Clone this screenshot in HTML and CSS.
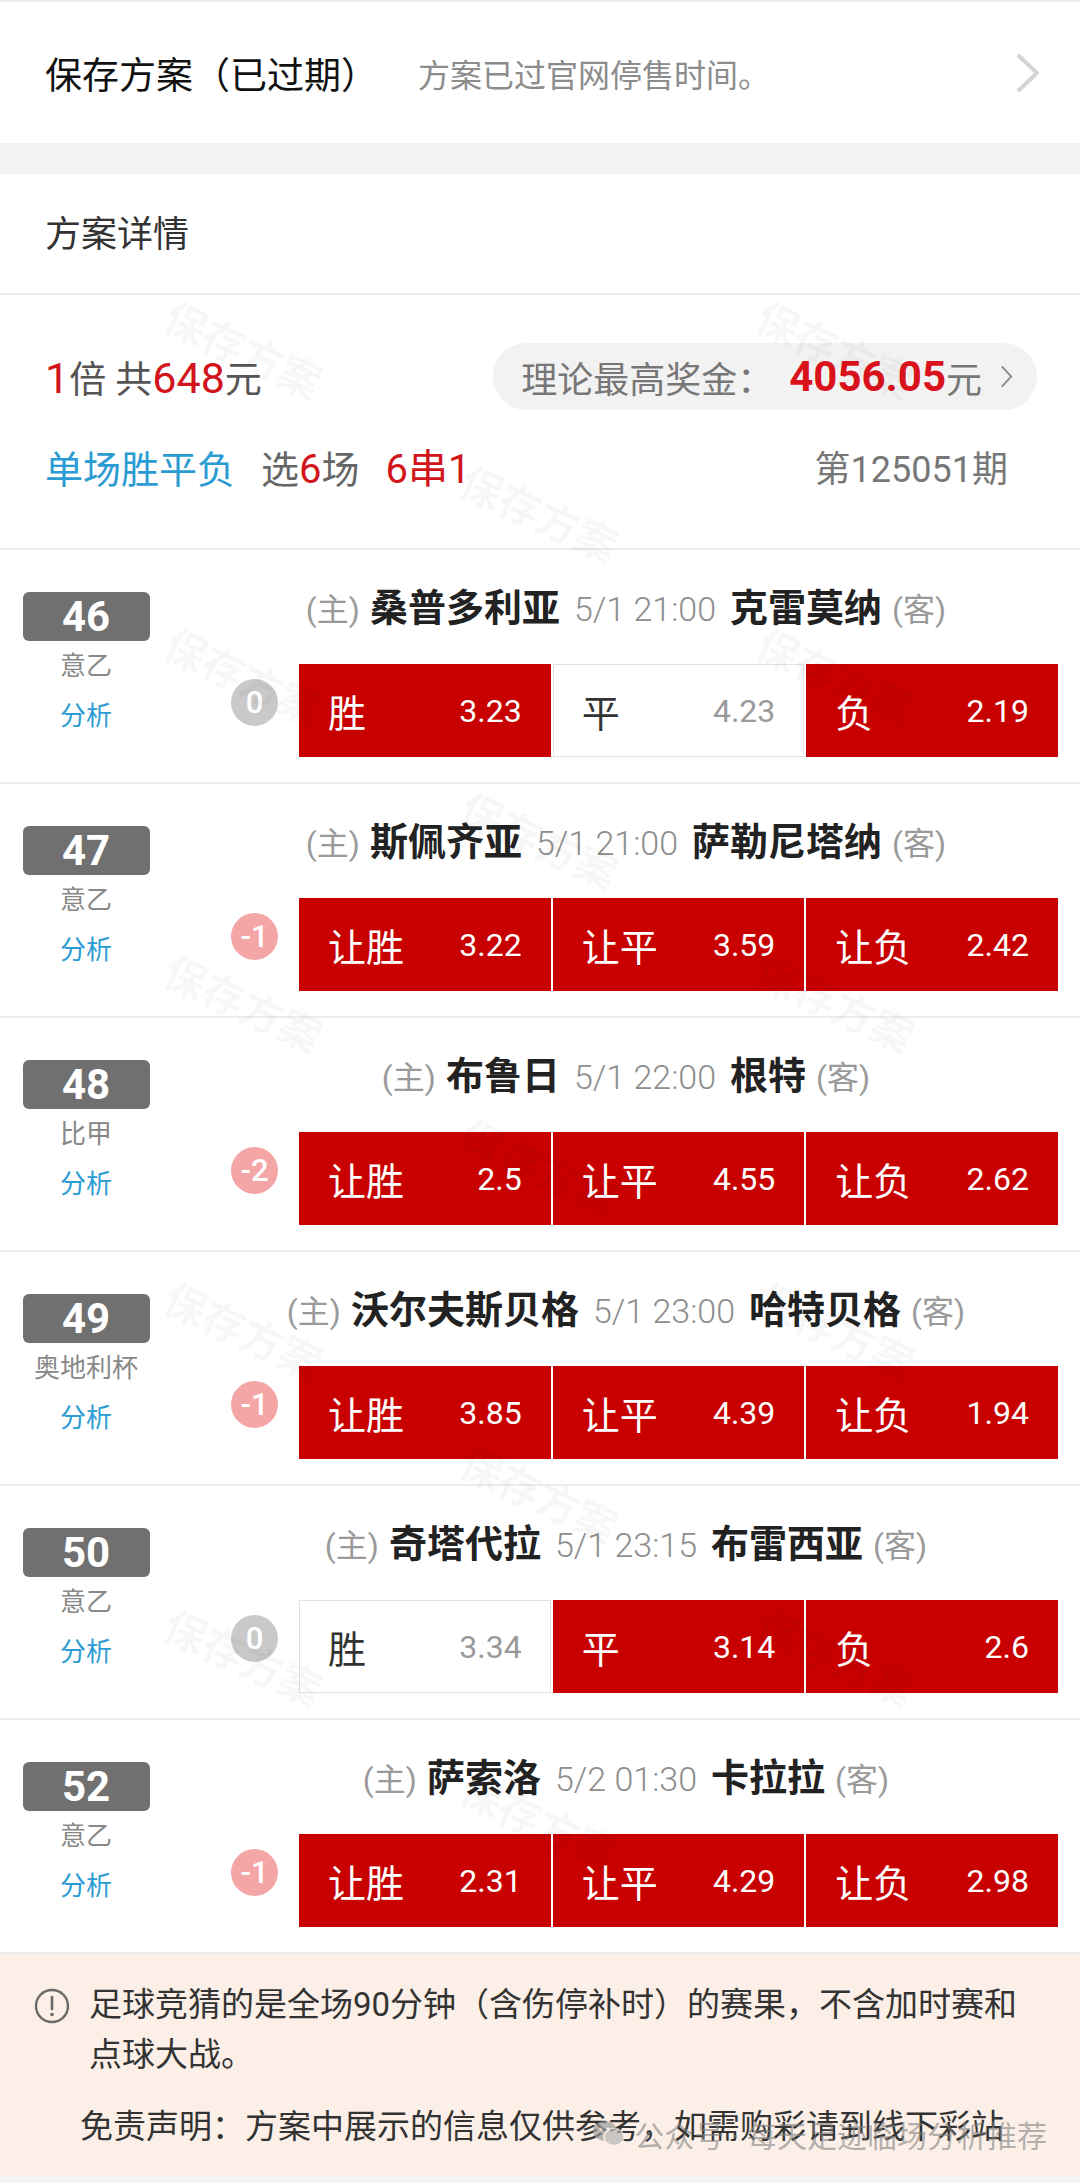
FILE: index.html
```html
<!DOCTYPE html>
<html lang="zh-CN">
<head>
    <meta charset="UTF-8">
    <meta name="viewport" content="width=device-width, initial-scale=1.0">
    <title>方案详情</title>
    <link rel="stylesheet" href="styles.css">
</head>
<body>
    <header class="plan-head">
        <span class="plan-title">保存方案（已过期）</span>
        <span class="plan-note">方案已过官网停售时间。</span>
        <svg class="plan-arrow" viewBox="0 0 26 42"><polyline points="4,4 22,21 4,38" fill="none" stroke="#d4d4d4" stroke-width="4" stroke-linecap="round" stroke-linejoin="round"/></svg>
    </header>

    <section class="detail">
        <div class="detail-title">方案详情</div>

        <div class="summary">
            <div class="summary-row">
                <div class="stake"><em>1</em>倍 共<em>648</em>元</div>
                <div class="prize">
                    <span>理论最高奖金：</span><b>4056.05</b><span>元</span>
                    <svg class="prize-arrow" viewBox="0 0 14 26"><polyline points="2,2 12,13 2,24" fill="none" stroke="#8a8a8a" stroke-width="2"/></svg>
                </div>
            </div>
            <div class="summary-row">
                <div class="play">
                    <span class="play-type">单场胜平负</span>
                    <span>选<em>6</em>场</span>
                    <em>6串1</em>
                </div>
                <div class="issue">第125051期</div>
            </div>
        </div>

        <div class="match">
            <div class="match-side">
                <div class="match-no">46</div>
                <div class="league">意乙</div>
                <div class="analyse">分析</div>
            </div>
            <div class="match-main">
                <div class="teams"><span class="tag">(主)</span><span class="team">桑普多利亚</span><span class="time">5/1 21:00</span><span class="team">克雷莫纳</span><span class="tag">(客)</span></div>
                <div class="bet">
                    <div class="handicap">0</div>
                    <div class="odds">
                        <div class="odd on"><span class="odd-name">胜</span><span class="odd-val">3.23</span></div>
                        <div class="odd"><span class="odd-name">平</span><span class="odd-val">4.23</span></div>
                        <div class="odd on"><span class="odd-name">负</span><span class="odd-val">2.19</span></div>
                    </div>
                </div>
            </div>
        </div>

        <div class="match">
            <div class="match-side">
                <div class="match-no">47</div>
                <div class="league">意乙</div>
                <div class="analyse">分析</div>
            </div>
            <div class="match-main">
                <div class="teams"><span class="tag">(主)</span><span class="team">斯佩齐亚</span><span class="time">5/1 21:00</span><span class="team">萨勒尼塔纳</span><span class="tag">(客)</span></div>
                <div class="bet">
                    <div class="handicap minus">-1</div>
                    <div class="odds">
                        <div class="odd on"><span class="odd-name">让胜</span><span class="odd-val">3.22</span></div>
                        <div class="odd on"><span class="odd-name">让平</span><span class="odd-val">3.59</span></div>
                        <div class="odd on"><span class="odd-name">让负</span><span class="odd-val">2.42</span></div>
                    </div>
                </div>
            </div>
        </div>

        <div class="match">
            <div class="match-side">
                <div class="match-no">48</div>
                <div class="league">比甲</div>
                <div class="analyse">分析</div>
            </div>
            <div class="match-main">
                <div class="teams"><span class="tag">(主)</span><span class="team">布鲁日</span><span class="time">5/1 22:00</span><span class="team">根特</span><span class="tag">(客)</span></div>
                <div class="bet">
                    <div class="handicap minus">-2</div>
                    <div class="odds">
                        <div class="odd on"><span class="odd-name">让胜</span><span class="odd-val">2.5</span></div>
                        <div class="odd on"><span class="odd-name">让平</span><span class="odd-val">4.55</span></div>
                        <div class="odd on"><span class="odd-name">让负</span><span class="odd-val">2.62</span></div>
                    </div>
                </div>
            </div>
        </div>

        <div class="match">
            <div class="match-side">
                <div class="match-no">49</div>
                <div class="league">奥地利杯</div>
                <div class="analyse">分析</div>
            </div>
            <div class="match-main">
                <div class="teams"><span class="tag">(主)</span><span class="team">沃尔夫斯贝格</span><span class="time">5/1 23:00</span><span class="team">哈特贝格</span><span class="tag">(客)</span></div>
                <div class="bet">
                    <div class="handicap minus">-1</div>
                    <div class="odds">
                        <div class="odd on"><span class="odd-name">让胜</span><span class="odd-val">3.85</span></div>
                        <div class="odd on"><span class="odd-name">让平</span><span class="odd-val">4.39</span></div>
                        <div class="odd on"><span class="odd-name">让负</span><span class="odd-val">1.94</span></div>
                    </div>
                </div>
            </div>
        </div>

        <div class="match">
            <div class="match-side">
                <div class="match-no">50</div>
                <div class="league">意乙</div>
                <div class="analyse">分析</div>
            </div>
            <div class="match-main">
                <div class="teams"><span class="tag">(主)</span><span class="team">奇塔代拉</span><span class="time">5/1 23:15</span><span class="team">布雷西亚</span><span class="tag">(客)</span></div>
                <div class="bet">
                    <div class="handicap">0</div>
                    <div class="odds">
                        <div class="odd"><span class="odd-name">胜</span><span class="odd-val">3.34</span></div>
                        <div class="odd on"><span class="odd-name">平</span><span class="odd-val">3.14</span></div>
                        <div class="odd on"><span class="odd-name">负</span><span class="odd-val">2.6</span></div>
                    </div>
                </div>
            </div>
        </div>

        <div class="match">
            <div class="match-side">
                <div class="match-no">52</div>
                <div class="league">意乙</div>
                <div class="analyse">分析</div>
            </div>
            <div class="match-main">
                <div class="teams"><span class="tag">(主)</span><span class="team">萨索洛</span><span class="time">5/2 01:30</span><span class="team">卡拉拉</span><span class="tag">(客)</span></div>
                <div class="bet">
                    <div class="handicap minus">-1</div>
                    <div class="odds">
                        <div class="odd on"><span class="odd-name">让胜</span><span class="odd-val">2.31</span></div>
                        <div class="odd on"><span class="odd-name">让平</span><span class="odd-val">4.29</span></div>
                        <div class="odd on"><span class="odd-name">让负</span><span class="odd-val">2.98</span></div>
                    </div>
                </div>
            </div>
        </div>

        <!-- watermark layer -->
        <div class="watermark">
            <i>保存方案</i><i></i><i>保存方案</i><i></i><i>保存方案</i><i></i>
            <i>保存方案</i><i></i><i>保存方案</i><i></i><i>保存方案</i><i></i>
            <i>保存方案</i><i></i><i>保存方案</i><i></i><i>保存方案</i><i></i>
            <i>保存方案</i><i></i><i>保存方案</i><i></i><i>保存方案</i><i></i>
            <i>保存方案</i><i></i><i>保存方案</i><i></i><i>保存方案</i><i></i>
        </div>
    </section>

    <div class="notice">
        <div class="notice-line">
            <svg class="notice-icon" viewBox="0 0 36 36"><circle cx="18" cy="18" r="16" fill="none" stroke="#6a6a6a" stroke-width="2.4"/><line x1="18" y1="9" x2="18" y2="21" stroke="#6a6a6a" stroke-width="2.6" stroke-linecap="round"/><circle cx="18" cy="26.5" r="1.8" fill="#6a6a6a"/></svg>
            <p>足球竞猜的是全场90分钟（含伤停补时）的赛果，不含加时赛和点球大战。</p>
        </div>
        <p class="disclaimer">免责声明：方案中展示的信息仅供参考，如需购彩请到线下彩站</p>
        <div class="wx-mark">
            <svg class="wx-logo" viewBox="0 0 34 30"><ellipse cx="13" cy="12" rx="12" ry="10" fill="#9c9c9c"/><ellipse cx="22" cy="18" rx="10" ry="8.5" fill="#b5b5b5" stroke="#fcefe7" stroke-width="1.5"/><circle cx="9" cy="10" r="1.6" fill="#fcefe7"/><circle cx="16" cy="10" r="1.6" fill="#fcefe7"/></svg>
            <span>公众号 · 每天足迹临场分析推荐</span>
        </div>
    </div>
</body>
</html>
```

FILE: styles.css
```css
body {
    margin: 0;
    background: #f3f3f3;
    font-family: Roboto, "Noto Sans CJK SC", sans-serif;
    color: #333;
}

p {
    margin: 0;
}

em {
    font-style: normal;
    color: #d2141b;
}

/* header */
.plan-head {
    height: 143px;
    box-sizing: border-box;
    border-top: 2px solid #ececec;
    background: #fff;
    display: flex;
    align-items: center;
    padding: 0 39px 0 45px;
}

.plan-title {
    font-size: 37px;
    color: #111;
}

.plan-note {
    flex: 1;
    margin-left: 40px;
    font-size: 32px;
    color: #8c8c8c;
}

.plan-arrow {
    width: 26px;
    height: 42px;
}

/* detail */
.detail {
    position: relative;
    overflow: hidden;
    margin-top: 31px;
    background: #fff;
}

.detail-title {
    height: 121px;
    box-sizing: border-box;
    padding: 4px 0 0 45px;
    line-height: 115px;
    font-size: 36px;
    color: #333;
    border-bottom: 2px solid #ececec;
}

.summary {
    padding: 48px 43px 53px 45px;
    border-bottom: 2px solid #ececec;
}

.summary-row {
    display: flex;
    justify-content: space-between;
    align-items: center;
}

.summary-row + .summary-row {
    margin-top: 35px;
    line-height: 50px;
}

.stake {
    font-size: 37px;
    color: #555;
}

.stake em {
    font-size: 43px;
}

.prize {
    height: 67px;
    border-radius: 34px;
    background: #f2f2f2;
    padding: 0 24px 0 28px;
    display: flex;
    align-items: center;
    font-size: 36px;
    color: #777;
}

.prize b {
    margin-left: 16px;
    font-size: 42px;
    color: #d9121b;
}

.prize-arrow {
    width: 13px;
    height: 25px;
    margin-left: 18px;
}

.play {
    display: flex;
    align-items: baseline;
    gap: 26px;
    font-size: 38px;
    color: #666;
}

.play em {
    font-size: 40px;
}

.play-type {
    color: #2b9bd3;
}

.issue {
    margin-right: 29px;
    font-size: 36px;
    color: #777;
}

/* matches */
.match {
    display: flex;
    height: 234px;
    box-sizing: border-box;
    border-bottom: 2px solid #ececec;
}

.match-side {
    width: 172px;
    padding-top: 42px;
    display: flex;
    flex-direction: column;
    align-items: center;
}

.match-no {
    width: 127px;
    height: 49px;
    border-radius: 6px;
    background: #707070;
    color: #fff;
    font-size: 42px;
    font-weight: 700;
    line-height: 49px;
    text-align: center;
}

.league,
.analyse {
    font-size: 26px;
    line-height: 50px;
    color: #888;
}

.analyse {
    color: #2b9bd3;
}

.match-main {
    flex: 1;
    padding-top: 33px;
}

.teams {
    display: flex;
    justify-content: center;
    align-items: baseline;
    gap: 10px;
    line-height: 50px;
    white-space: nowrap;
}

.tag {
    font-size: 32px;
    color: #9a9a9a;
}

.team {
    font-size: 38px;
    font-weight: 700;
    color: #222;
}

.time {
    margin: 0 4px;
    font-size: 34px;
    font-weight: 300;
    color: #8e8e8e;
}

.bet {
    display: flex;
    align-items: center;
    margin: 29px 22px 0 0;
}

.handicap {
    width: 47px;
    height: 47px;
    flex: none;
    margin: 0 21px 16px 59px;
    border-radius: 50%;
    background: #c9c9c9;
    color: #fff;
    font-size: 31px;
    font-weight: 500;
    line-height: 47px;
    text-align: center;
}

.handicap.minus {
    background: #f4a6a6;
}

.odds {
    flex: 1;
    height: 93px;
    display: grid;
    grid-template-columns: repeat(3, 1fr);
    gap: 2px;
}

.odd {
    display: flex;
    justify-content: space-between;
    align-items: center;
    padding: 0 28px;
    background: #fff;
    border: 1px solid #e3e3e3;
    color: #333;
}

.odd.on {
    background: #c80000;
    border-color: #c80000;
    color: #fff;
}

.odd-name {
    font-size: 38px;
}

.odd-val {
    font-size: 32px;
    color: #9a9a9a;
}

.odd.on .odd-val {
    color: #fff;
}

/* watermark */
.watermark {
    position: absolute;
    left: 96px;
    top: 92px;
    display: grid;
    grid-template-columns: repeat(3, 296px);
    grid-auto-rows: 163.5px;
    pointer-events: none;
}

.watermark i {
    display: flex;
    align-items: center;
    justify-content: center;
    font-style: normal;
    font-size: 42px;
    font-weight: 700;
    color: rgba(0, 0, 0, 0.045);
    transform: rotate(25deg);
}

/* notice */
.notice {
    position: relative;
    background: #fcefe7;
    padding: 26px 30px 25px 34px;
    margin-bottom: 8px;
    color: #333;
}

.notice-line {
    display: flex;
    gap: 19px;
    font-size: 33px;
    line-height: 50px;
}

.notice-icon {
    width: 36px;
    height: 36px;
    flex: none;
    margin-top: 8px;
}

.disclaimer {
    margin-top: 22px;
    padding-left: 46px;
    font-size: 33px;
    line-height: 50px;
}

.wx-mark {
    position: absolute;
    right: 33px;
    bottom: 21px;
    display: flex;
    align-items: center;
    gap: 8px;
    font-size: 30px;
    color: rgba(130, 130, 130, 0.6);
}

.wx-logo {
    width: 34px;
    height: 30px;
    opacity: 0.7;
}
```
